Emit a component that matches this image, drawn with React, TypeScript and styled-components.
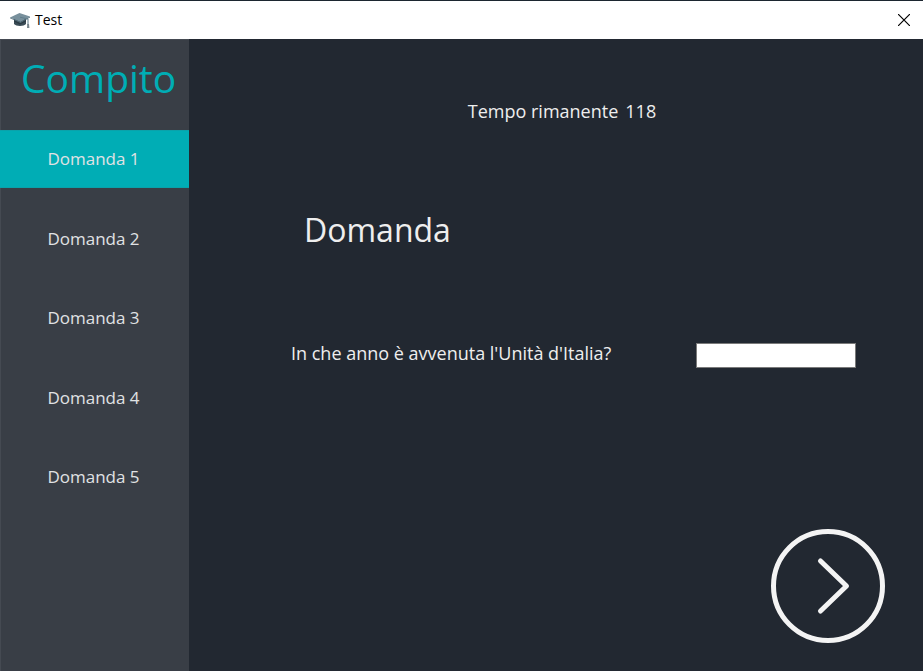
import React, { useState } from "react";
import styled, { createGlobalStyle } from "styled-components";

const GlobalStyle = createGlobalStyle`
  * { box-sizing: border-box; }
  body { margin: 0; background: #222831; }
  button, input { font: inherit; }
`;

const Window = styled.div`
  display: flex;
  flex-direction: column;
  min-height: 100vh;
  border-top: 1px solid #1c2630;
  background: #222831;
  color: #eeeeee;
  font-family: "Segoe UI", "Open Sans", "Noto Sans", sans-serif;
  font-size: 18px;
  line-height: 24px;
`;

const TitleBar = styled.header`
  display: flex;
  align-items: center;
  gap: 4px;
  height: 38px;
  padding: 0 10px;
  background: #ffffff;
  color: #000000;
`;

const WindowTitle = styled.span`
  flex: 1;
  font-size: 14px;
  line-height: 20px;
`;

const CloseButton = styled.button`
  display: flex;
  padding: 3px;
  border: 0;
  background: none;
  color: #000000;
`;

const Body = styled.div`
  display: flex;
  flex: 1;
`;

const Sidebar = styled.nav`
  flex: none;
  width: 189px;
  border: 1px solid #454a52;
  border-width: 1px 0 0 1px;
  background: #393e46;
`;

const Brand = styled.h1`
  margin: 0;
  padding: 13px 0 27px 20px;
  color: #00adb5;
  font-size: 39px;
  font-weight: 400;
  line-height: 50px;
`;

const QuestionList = styled.div`
  display: flex;
  flex-direction: column;
  justify-content: space-between;
  height: 376px;
  margin-left: -1px;
`;

const QuestionButton = styled.button<{ $active: boolean }>`
  height: 58px;
  padding: 0 2px 0 0;
  border: ${(p) => (p.$active ? "1px solid #0aa2aa" : "0")};
  border-width: ${(p) => (p.$active ? "1px 0" : "0")};
  background: ${(p) => (p.$active ? "#00adb5" : "transparent")};
  color: #e0e2e4;
  font-size: 17px;
`;

const Main = styled.main`
  display: flex;
  flex: 1;
  flex-direction: column;
  padding: 60px 38px 27px 102px;
`;

const Timer = styled.p`
  display: flex;
  justify-content: center;
  gap: 7px;
  margin: 0 52px 0 0;
`;

const Heading = styled.h2`
  margin: 84px 0 0 13px;
  font-size: 32px;
  font-weight: 400;
  line-height: 46px;
`;

const QuestionRow = styled.div`
  display: flex;
  align-items: center;
  justify-content: space-between;
  margin: 84px 29px 0 0;
`;

const Answer = styled.input`
  width: 160px;
  height: 25px;
  margin-top: 6px;
  padding: 0 4px;
  border: 1px solid #7a7a7a;
  border-radius: 0;
  background: #ffffff;
  color: #000000;
  font-size: 16px;
  outline: none;
`;

const NextButton = styled.button`
  display: flex;
  align-self: flex-end;
  margin-top: auto;
  padding: 0;
  border: 0;
  background: none;
  color: #f4f4f4;
`;

function GraduationCap() {
  return (
    <svg width="21" height="18" viewBox="0 0 21 18" aria-hidden="true">
      <path d="M4 8v5c2 2.6 10 2.6 12 0V8z" fill="#3b4d57" />
      <path d="M4 8v2.5l6 3 6-3V8z" fill="#2b3a43" />
      <path d="M0 6.4 9.5 2 20 5.6 10.5 11z" fill="#78909c" />
      <path d="M0 6.4 10.5 11 20 5.6v.9L10.5 12 0 7.2z" fill="#546e7a" />
      <path d="M10 6.2 18 8v6" fill="none" stroke="#607d8b" strokeWidth="1" />
      <path d="M17.2 13h1.8l.4 4h-2.4z" fill="#78858c" />
    </svg>
  );
}

const questions = [1, 2, 3, 4, 5];

export default function App() {
  const [current, setCurrent] = useState(1);
  return (
    <Window>
      <GlobalStyle />
      <TitleBar>
        <GraduationCap />
        <WindowTitle>Test</WindowTitle>
        <CloseButton type="button" aria-label="Chiudi">
          <svg width="12" height="12" viewBox="0 0 12 12" aria-hidden="true">
            <path d="M0 0 12 12M12 0 0 12" stroke="currentColor" strokeWidth="1.2" />
          </svg>
        </CloseButton>
      </TitleBar>
      <Body>
        <Sidebar>
          <Brand>Compito</Brand>
          <QuestionList>
            {questions.map((n) => (
              <QuestionButton key={n} type="button" $active={n === current} onClick={() => setCurrent(n)}>
                Domanda {n}
              </QuestionButton>
            ))}
          </QuestionList>
        </Sidebar>
        <Main>
          <Timer>
            <span>Tempo rimanente</span>
            <span>118</span>
          </Timer>
          <Heading>Domanda</Heading>
          <QuestionRow>
            <label htmlFor="answer">In che anno è avvenuta l'Unità d'Italia?</label>
            <Answer id="answer" type="text" />
          </QuestionRow>
          <NextButton
            type="button"
            aria-label="Domanda successiva"
            onClick={() => setCurrent(Math.min(current + 1, questions.length))}
          >
            <svg width="114" height="116" viewBox="0 0 114 116" fill="none" stroke="currentColor" aria-hidden="true">
              <circle cx="57" cy="58" r="54.5" strokeWidth="5" />
              <path d="M49.5 33 75.5 58 49.5 83" strokeWidth="5" strokeLinecap="round" strokeLinejoin="round" />
            </svg>
          </NextButton>
        </Main>
      </Body>
    </Window>
  );
}
